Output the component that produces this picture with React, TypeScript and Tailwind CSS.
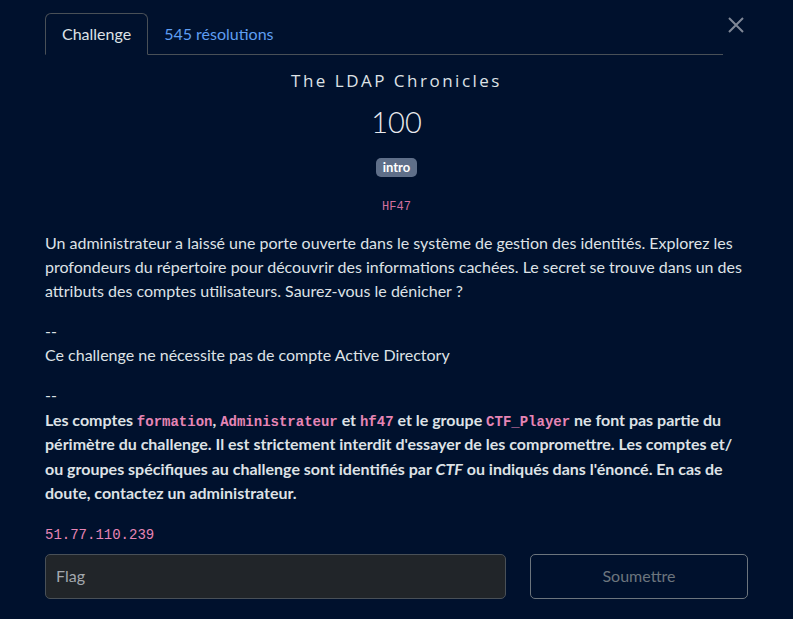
import React from "react";

const mono = "font-['Liberation_Mono',monospace]";

export default function App() {
  return (
    <div className="min-h-[619px] w-full bg-[#00112d] font-['Lato',sans-serif] text-[16px] text-[#dee2e6] relative">
      <button className="absolute right-[48px] top-[16px] text-[#7f8796]" aria-label="close">
        <svg width="18" height="18" viewBox="0 0 18 18" fill="none" stroke="currentColor" strokeWidth="2">
          <path d="M2 2 L16 16 M16 2 L2 16" />
        </svg>
      </button>
      <div className="px-[45px] pt-[13px]">
        <div className="mr-[25px] flex border-b border-[#495057]">
          <div className="-mb-px rounded-t-[6px] border border-[#495057] border-b-[#00112d] px-[16px] pt-[9px] pb-[9px] leading-[22px] text-[#dee2e6]">
            Challenge
          </div>
          <div className="px-[16px] pt-[10px] pb-[8px] leading-[22px] text-[#5e9ef2]">545 résolutions</div>
        </div>

        <div className="flex flex-col items-center">
          <div className="mt-[15px] font-['Open_Sans',sans-serif] text-[17px] leading-[22px] tracking-[2.5px] text-[#dee2e6]">
            The LDAP Chronicles
          </div>
          <div className="mt-[19px] text-[29px] font-light leading-[21px] text-[#e8eaee]">100</div>
          <div className="mt-[26px] flex h-[19px] items-center rounded-[5px] bg-[#5f6f89] px-[7px] text-[13px] font-bold leading-[19px] text-white">
            intro
          </div>
          <div className={`mt-[22px] ${mono} text-[12px] leading-[16px] text-[#d5709f]`}>HF47</div>
        </div>

        <div className="mt-[16px] leading-[24px]">
          <p>
            Un administrateur a laissé une porte ouverte dans le système de gestion des identités. Explorez les
            profondeurs du répertoire pour découvrir des informations cachées. Le secret se trouve dans un des
            attributs des comptes utilisateurs. Saurez-vous le dénicher ?
          </p>
          <p className="mt-[16px]">
            --
            <br />
            Ce challenge ne nécessite pas de compte Active Directory
          </p>
          <p className="mt-[16px] leading-[24.5px]">
            --
            <br />
            <strong className="font-bold">
              Les comptes <code className={`${mono} text-[14px] leading-[16px] text-[#e685b5]`}>formation</code>,{" "}
              <code className={`${mono} text-[14px] leading-[16px] text-[#e685b5]`}>Administrateur</code> et{" "}
              <code className={`${mono} text-[14px] leading-[16px] text-[#e685b5]`}>hf47</code> et le groupe{" "}
              <code className={`${mono} text-[14px] leading-[16px] text-[#e685b5]`}>CTF_Player</code> ne font pas partie du
              périmètre du challenge. Il est strictement interdit d'essayer de les compromettre. Les comptes et/
              ou groupes spécifiques au challenge sont identifiés par <em>CTF</em> ou indiqués dans l'énoncé. En cas de
              doute, contactez un administrateur.
            </strong>
          </p>
          <div className={`mt-[19px] ${mono} text-[14px] leading-[20px] text-[#e685b5]`}>51.77.110.239</div>
        </div>

        <div className="mt-[9px] flex gap-[24px]">
          <div className="flex h-[45px] flex-1 items-center rounded-[5px] border border-[#495057] bg-[#212529] px-[10px] text-[16px] text-[#a3a8ae]">
            Flag
          </div>
          <div className="flex h-[45px] w-[218px] items-center justify-center rounded-[5px] border border-[#6c757d] text-[#6c757d]">
            Soumettre
          </div>
        </div>
      </div>
    </div>
  );
}
